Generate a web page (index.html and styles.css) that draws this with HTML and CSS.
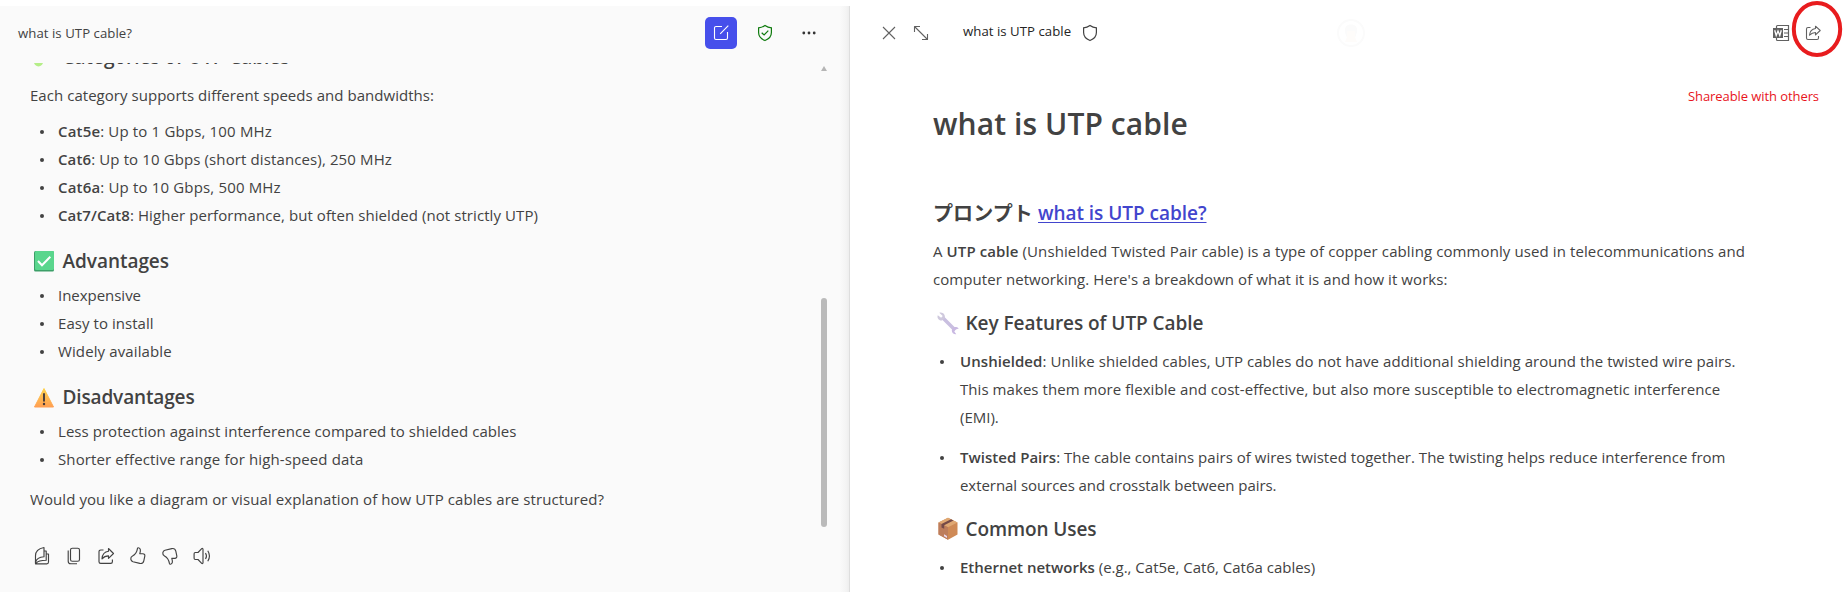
FILE: index.html
```html
<!DOCTYPE html>
<html lang="en">
<head>
<meta charset="utf-8">
<title>what is UTP cable?</title>
<link rel="stylesheet" href="styles.css">
</head>
<body>
<div class="app">
  <section class="chat">
    <header class="chat-head">
      <span class="chat-title">what is UTP cable?</span>
      <button class="edit-btn" aria-label="Edit in page"><svg width="16" height="16" viewBox="0 0 16 16"><path d="M9 1.500H3A1.500 1.500 0 0 0 1.500 3v10A1.500 1.500 0 0 0 3 14.500h10a1.500 1.500 0 0 0 1.500-1.500V7M7.200 8.800 15.300.7"/></svg></button>
      <svg class="shield-ok" width="16" height="18" viewBox="0 0 16 18"><path d="M8 1.500c1.900 1.400 4 2.200 6.400 2.300v4.700c0 3.800-2.200 6.400-6.400 8-4.200-1.600-6.400-4.200-6.400-8V3.800C4 3.700 6.100 2.900 8 1.500z"/><path d="m4.700 8.700 2.400 2.300 4.200-4.300"/></svg>
      <svg class="more" width="14" height="4" viewBox="0 0 14 4"><circle cx="1.800" cy="2" r="1.400"/><circle cx="7" cy="2" r="1.400"/><circle cx="12.200" cy="2" r="1.400"/></svg>
    </header>
    <div class="chat-scroll">
      <div class="chat-body">
        <h3 class="head head-cut"><svg class="emoji" width="22" height="22" viewBox="0 0 22 22"><path d="M5 8 12 3l6 6-6 7z" fill="#8fd45c"/><circle cx="5.500" cy="15.800" r="4.600" fill="#b5ee88"/></svg><span class="t-cat">Categories of UTP Cables</span></h3>
        <p class="t-each">Each category supports different speeds and bandwidths:</p>
        <ul class="list list-first">
          <li class="t-c5"><b>Cat5e</b>: Up to 1 Gbps, 100 MHz</li>
          <li class="t-c6"><b>Cat6</b>: Up to 10 Gbps (short distances), 250 MHz</li>
          <li class="t-c5"><b>Cat6a</b>: Up to 10 Gbps, 500 MHz</li>
          <li class="t-c7"><b>Cat7/Cat8</b>: Higher performance, but often shielded (not strictly UTP)</li>
        </ul>
        <h3 class="head"><svg class="emoji" width="22" height="22" viewBox="0 0 22 22"><rect x="1" y="1" width="20" height="20.500" rx="1.500" fill="#3c9f68"/><rect x="2" y="1" width="19" height="19" rx="1.300" fill="#5ad68d"/><path d="m5 11 4 4.300 8.300-8.600" fill="none" stroke="#fff" stroke-width="2"/></svg><span class="t-adv">Advantages</span></h3>
        <ul class="list">
          <li class="t-inex">Inexpensive</li>
          <li class="t-easy">Easy to install</li>
          <li class="t-c6">Widely available</li>
        </ul>
        <h3 class="head"><svg class="emoji" width="22" height="22" viewBox="0 0 22 22"><defs><linearGradient id="warn" x1="0" y1="0" x2="0" y2="1"><stop offset="0" stop-color="#ffd34e"/><stop offset="1" stop-color="#ff9f52"/></linearGradient></defs><path d="M11 2.500 20.500 21h-19z" fill="url(#warn)" stroke="url(#warn)" stroke-linejoin="round"/><path d="M11 8v6.800" stroke="#443a3c" stroke-width="1.900" stroke-linecap="round"/><circle cx="11" cy="18" r="1.200" fill="#443a3c"/></svg><span class="t-dis">Disadvantages</span></h3>
        <ul class="list">
          <li class="t-less">Less protection against interference compared to shielded cables</li>
          <li class="t-c6">Shorter effective range for high-speed data</li>
        </ul>
        <p class="t-would">Would you like a diagram or visual explanation of how UTP cables are structured?</p>
        <div class="actions">
          <svg viewBox="0 0 20 20"><path d="M3.500 16.500V9.800c0-4 3-7.300 8.500-8.300v9.300c-4.500.2-7.500 1.700-8.500 5.700z"/><path d="M3.500 15.500v2.300h11.300c1 0 1.700-.8 1.700-1.800V8h-2.300M12 5h2.200v9.200C9.500 14.200 6 14.800 4 17.300"/></svg>
          <svg viewBox="0 0 20 20"><rect x="6.500" y="2.200" width="9" height="13" rx="1.800"/><path d="M4.200 4.500v10.700c0 1.500 1 2.500 2.500 2.500h6.300"/></svg>
          <svg viewBox="0 0 20 20"><path d="M7.500 4H4.700C3.700 4 3 4.700 3 5.700v10c0 1 .7 1.700 1.700 1.700h10c1 0 1.700-.7 1.700-1.700V13.500"/><path d="M12.500 2.500 17.500 7.500l-5 4.800V9.800c-3 0-4.800 1-6.500 3 .3-4 2.500-7 6.500-7.500z"/></svg>
          <svg viewBox="0 0 20 20"><path d="M10.500 1.800c1.800.3 2.500 2 1.300 5.900h3c1.500 0 2.300 1 2 2.500l-1 4.600c-.5 2-2 3-4 2.600L5 15.800c-1.300-.4-2-1.300-2.200-2.600-.2-1.700.3-2.600 1.700-3.200C7.500 8.500 9 5.500 9.500 2.300c.1-.4.500-.6 1-.5z"/></svg>
          <svg viewBox="0 0 20 20"><path d="M10.500 18.200c1.800-.3 2.500-2 1.300-5.900h3c1.500 0 2.300-1 2-2.500l-1-4.600c-.5-2-2-3-4-2.600L5 4.200C3.700 4.600 3 5.500 2.800 6.800 2.600 8.500 3.100 9.400 4.500 10c3 1.500 4.500 4.500 5 7.700.1.400.5.600 1 .5z"/></svg>
          <svg viewBox="0 0 20 20"><path d="M11 3.200v13.600c0 .8-.8 1-1.300.5L6 13.500H3.300c-.7 0-1.200-.5-1.200-1.200V7.700c0-.7.500-1.200 1.200-1.200H6l3.700-3.800c.5-.5 1.300-.3 1.300.5zM13.500 7c1.300 2 1.300 4 0 6M15.800 4.800c2.200 3.500 2.200 7 0 10.400"/></svg>
        </div>
      </div>
      <div class="scrollbar"><i class="arrow"></i><i class="thumb"></i></div>
    </div>
  </section>
  <section class="page">
    <header class="page-head">
      <svg class="line-icon close" width="14" height="14" viewBox="0 0 14 14"><path d="m1 1 12 12M13 1 1 13"/></svg>
      <svg class="line-icon expand" width="16" height="16" viewBox="0 0 16 16"><path d="M1.500 7V1.500H7M1.500 1.500l13 13M9 14.500h5.500V9"/></svg>
      <span class="page-name">what is UTP cable</span>
      <svg class="shield" width="16" height="18" viewBox="0 0 16 18"><path d="M8 1.500c1.900 1.400 4 2.200 6.400 2.300v4.700c0 3.800-2.200 6.400-6.400 8-4.200-1.600-6.400-4.200-6.400-8V3.800C4 3.700 6.100 2.900 8 1.500z"/></svg>
      <svg class="avatar" width="28" height="28" viewBox="0 0 28 28"><circle cx="14" cy="14" r="13" fill="none" stroke="#fbfbfb" stroke-width="2"/><path d="M8 14c-1-6 2-8.500 6-8.500s7 2.500 6 8l-2 5h-8z" fill="#fbfbfb"/><path d="M10 12h8v6l2 5H8l2-5z" fill="#fefcfa"/></svg>
      <svg class="word" width="17" height="18" viewBox="0 0 17 18"><path d="M3.500 4V2.500c0-.6.400-1 1-1h11v15h-11c-.6 0-1-.4-1-1V14M11 5.500h4M11 9h4M11 12.500h4" fill="none" stroke="#616161" stroke-width="1.200"/><rect x="0" y="4" width="10" height="10" fill="#616161"/><path d="m1.700 6.300 1.500 5.200L5 7l1.800 4.500 1.500-5.200" fill="none" stroke="#fff" stroke-width="1.300"/></svg>
      <span class="share"><svg class="line-icon" width="16" height="16" viewBox="0 0 16 16"><path d="M5.500 2.500H3c-.9 0-1.500.6-1.500 1.500v9c0 .9.600 1.500 1.500 1.500h9c.9 0 1.500-.6 1.500-1.500v-2"/><path d="M10.500 1.200 15.200 5.500l-4.700 4.300V7.500C8 7.500 6.300 8.300 4.500 10.200 4.800 6.500 7 4 10.500 3.500z"/></svg>
        <svg class="ring" width="52" height="58" viewBox="0 0 52 58"><ellipse cx="26" cy="29" rx="23.200" ry="26" fill="none" stroke="#e81c1e" stroke-width="4"/></svg></span>
    </header>
    <div class="note">Shareable with others</div>
    <main class="doc">
      <h1>what is UTP cable</h1>
      <h2><span class="jp">プロンプト</span><a href="#">what is UTP cable?</a></h2>
      <p><span class="ln t-a1">A <b>UTP cable</b> (Unshielded Twisted Pair cable) is a type of copper cabling commonly used in telecommunications and</span> <span class="ln t-a2">computer networking. Here's a breakdown of what it is and how it works:</span></p>
      <h3 class="head"><svg class="emoji" width="24" height="24" viewBox="0 0 24 24"><path d="m6 6 13 13" stroke="#c9bfe0" stroke-width="3.600"/><path d="M3.300 1.800 7 5.200l-1.600 1.900L1.800 4.300C.6 7 3 10 6 9.500l2.800-2.300C9.600 4 7 .6 3.300 1.800z" fill="#cfc9dd"/><path d="M22.800 17.500C20 15 16 16 15.800 19.500c0 2.500 2 4 4.500 3.700L18.300 20.500l1.500-2z" fill="#c9b9e2"/></svg><span class="t-key">Key Features of UTP Cable</span></h3>
      <ul class="list spaced">
        <li><span class="ln t-u1"><b>Unshielded</b>: Unlike shielded cables, UTP cables do not have additional shielding around the twisted wire pairs.</span> <span class="ln t-u1">This makes them more flexible and cost-effective, but also more susceptible to electromagnetic interference</span> <span class="ln">(EMI).</span></li>
        <li><span class="ln t-w1"><b>Twisted Pairs</b>: The cable contains pairs of wires twisted together. The twisting helps reduce interference from</span> <span class="ln t-w2">external sources and crosstalk between pairs.</span></li>
      </ul>
      <h3 class="head"><svg class="emoji" width="24" height="24" viewBox="0 0 24 24"><path d="m12 .8 9.500 4.700v12L12 22.800l-9.500-5.300v-12z" fill="#cf8a56"/><path d="m12 .8 9.500 4.700L12 10.300 2.500 5.500z" fill="#e0a873"/><path d="m2.500 5.500 9.500 4.800v12.500l-9.500-5.300z" fill="#bd7d5c"/><path d="m5.500 7 9.500-4.700 2.500 1.200L8.200 8.300v3.500l-2.700-1.300z" fill="#754a48"/><path d="m8 17.300 3 1.600v2l-3-1.600z" fill="#ecd9ee"/></svg><span class="t-com">Common Uses</span></h3>
      <ul class="list spaced"><li><b>Ethernet networks</b> (e.g., Cat5e, Cat6, Cat6a cables)</li></ul>
    </main>
  </section>
</div>
</body>
</html>
```

FILE: styles.css
```css
* { box-sizing: border-box; margin: 0; padding: 0; }
body { width: 1843px; height: 592px; overflow: hidden; background: #fff; color: #424242; font: 15px/28px "Open Sans", "Noto Sans CJK JP", sans-serif; }
b { font-weight: 600; }
svg { display: block; flex: none; fill: none; }
.app { display: flex; height: 592px; padding-top: 6px; }

/* chat pane */
.chat { width: 850px; height: 586px; display: flex; flex-direction: column; background: linear-gradient(to right, transparent 840px, #f4f4f4 846px, #eee 849px, #dedede 849px), #fafafa; }
.chat-head { height: 57px; flex: none; display: flex; align-items: center; padding: 0 34px 3px 18px; }
.chat-title { flex: 1; font-size: 13.2px; letter-spacing: .045px; }
.edit-btn { width: 32px; height: 32px; border: 0; border-radius: 5px; background: #464feb; display: flex; align-items: center; justify-content: center; }
.edit-btn path { stroke: #fff; stroke-width: 1.1; fill: none; }
.shield-ok { margin-left: 20px; stroke: #0e7a0d; stroke-width: 1.2; }
.more { margin-left: 29px; fill: #333; }
.chat-scroll { flex: 1; min-height: 0; display: flex; overflow: hidden; }
.chat-body { width: 821px; padding-left: 30px; }
.scrollbar { width: 6px; display: flex; flex-direction: column; }
.arrow { margin-top: 3px; border: 3px solid transparent; border-top: 0; border-bottom: 5px solid #b5b5b5; }
.thumb { margin-top: 227px; height: 229px; border-radius: 3px; background: #bababa; }

.head { display: flex; align-items: center; height: 28px; margin: 18px 0 6px; font-size: 19px; font-weight: 600; }
.emoji { margin: 0 8px 0 2.500px; }
.head-cut { margin: -20px 0 10px; }
.list { list-style: none; }
.list li { position: relative; padding-left: 28px; }
.list li::before { content: ""; position: absolute; left: 10px; top: 13px; width: 4px; height: 4px; border-radius: 50%; background: #424242; }
.list-first { margin-top: 8px; }
.t-would { margin-top: 12px; letter-spacing: .079px; }
.actions { display: flex; gap: 12px; margin: 33px 0 0 2px; }
.actions svg { width: 20px; height: 20px; stroke: #424242; stroke-width: 1.15; stroke-linejoin: round; }

/* page pane */
.page { width: 993px; height: 586px; position: relative; background: #fff; }
.page-head { height: 54px; display: flex; align-items: center; padding-left: 32px; }
.line-icon { stroke: #616161; stroke-width: 1.1; stroke-linejoin: round; }
.expand { margin-left: 17px; }
.page-name { margin: -4px 0 0 34px; width: 109px; font-size: 13.2px; letter-spacing: .04px; white-space: nowrap; color: #242424; }
.shield { margin-left: 10px; stroke: #424242; stroke-width: 1.2; }
.avatar { margin-left: 239px; }
.word { margin-left: 408px; }
.share { position: relative; margin-left: 15px; }
.ring { position: absolute; left: -14px; top: -25px; }
.note { position: absolute; left: 838px; top: 76px; line-height: 28px; font-size: 13px; letter-spacing: -.079px; color: #e8141c; white-space: nowrap; }
.doc { padding: 44px 0 0 83px; }
h1 { font-size: 30px; line-height: 40px; font-weight: 600; letter-spacing: .085px; }
h2 { display: flex; height: 28px; margin: 55px 0 10px; font-size: 19px; line-height: 28px; font-weight: 600; letter-spacing: -.036px; }
.jp { width: 105px; font-family: "Noto Sans CJK JP", sans-serif; font-weight: 700; font-size: 20px; letter-spacing: .1px; white-space: nowrap; }
h2 a { color: #4245cd; text-decoration-thickness: 1px; text-underline-offset: 2px; }
.ln { display: block; white-space: nowrap; }
.doc .head { margin: 16px 0 10px; }
.doc .emoji { margin: 0 6px 0 2.500px; }
.doc .list li { padding-left: 27px; }
.doc .list li::before { left: 7px; }
.spaced li + li { margin-top: 12px; }

/* per-line tracking */
.t-cat { letter-spacing: -.023px; }
.t-each { letter-spacing: .04px; }
.t-c5 { letter-spacing: .165px; }
.t-c6 { letter-spacing: .118px; }
.t-c7 { letter-spacing: .077px; }
.t-adv { letter-spacing: -.041px; }
.t-inex { letter-spacing: -.03px; }
.t-easy { letter-spacing: .05px; }
.t-dis { letter-spacing: -.141px; }
.t-less { letter-spacing: .049px; }
.t-a1 { letter-spacing: .101px; }
.t-a2 { letter-spacing: .068px; }
.t-key { letter-spacing: -.048px; }
.t-u1 { letter-spacing: .061px; }
.t-w1 { letter-spacing: .02px; }
.t-w2 { letter-spacing: -.057px; }
.t-com { letter-spacing: -.097px; }
```
